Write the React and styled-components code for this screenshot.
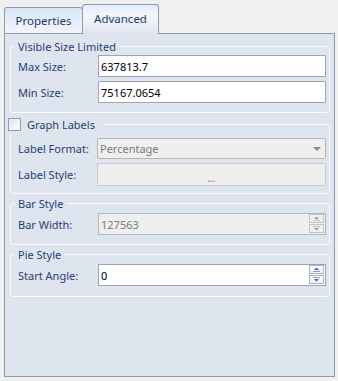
import React from "react";
import styled, { createGlobalStyle } from "styled-components";

const Global = createGlobalStyle`
  html, body { margin: 0; padding: 0; background: #f0f0f0; }
  body { font-family: "Noto Sans", "Open Sans", sans-serif; font-size: 11px; }
  * { box-sizing: border-box; }
`;

const Page = styled.div`
  width: 338px;
  height: 381px;
  padding: 4px 0 0 4px;
`;

const TabStrip = styled.div`
  display: flex;
  align-items: flex-end;
  height: 29px;
`;

const Tab = styled.div`
  position: relative;
  z-index: ${(p) => (p.$active ? 2 : 1)};
  width: ${(p) => p.$w}px;
  height: ${(p) => (p.$active ? 30 : 26)}px;
  margin-bottom: ${(p) => (p.$active ? -1 : 0)}px;
  margin-left: ${(p) => (p.$active ? -1 : 0)}px;
  border: 1px solid #8b9cb2;
  border-bottom: none;
  border-radius: 3px 3px 0 0;
  background: ${(p) =>
    p.$active
      ? "linear-gradient(#e4eefb 0%, #f2f6fc 35%, #e9eef5 70%, #dfe5ee 100%)"
      : "linear-gradient(#d7e5f7 0%, #e9f0fa 60%, #f1f5fb 100%)"};
  color: #1e3a66;
  display: flex;
  justify-content: center;
  padding-top: ${(p) => (p.$active ? 6 : 5)}px;
  font-size: 11.5px;
`;

const Panel = styled.div`
  width: 331px;
  height: 344px;
  border: 1px solid #8b9cb2;
  background: #dfe5ee;
  padding: 5px 4px 0 5px;
  display: flex;
  flex-direction: column;
`;

const Group = styled.fieldset`
  margin: ${(p) => p.$mt}px 0 0 0;
  padding: 0;
  border: 1px solid #fafbfd;
  border-radius: 3px;
  min-width: 0;
`;

const Legend = styled.legend`
  height: 15px;
  line-height: 15px;
  margin-left: ${(p) => p.$ml ?? 4}px;
  padding: 0 ${(p) => p.$pr ?? 3}px 0 ${(p) => p.$pl ?? 3}px;
  color: #1e3f7a;
  font-size: 11px;
  display: flex;
  align-items: center;
  gap: 6px;
`;

const CheckBox = styled.span`
  display: inline-block;
  width: 13px;
  height: 13px;
  border: 1px solid #8e9fb5;
  background: linear-gradient(135deg, #d9dfe8 0%, #f3f5f8 60%, #ffffff 100%);
  box-shadow: inset 0 0 0 1px #eef1f5;
`;

const Body = styled.div`
  padding: ${(p) => p.$pt}px 3px ${(p) => p.$pb}px 7px;
  display: flex;
  flex-direction: column;
  gap: 4px;
`;

const Row = styled.div`
  display: grid;
  grid-template-columns: 80px 1fr;
  align-items: center;
`;

const Label = styled.span`
  color: #1e3f7a;
  font-size: 11px;
  white-space: nowrap;
`;

const Field = styled.div`
  height: ${(p) => p.$h ?? 22}px;
  margin-left: ${(p) => p.$ml ?? 0}px;
  border: 1px solid ${(p) => (p.$disabled ? "#b4b7bc" : "#9aa6b6")};
  border-radius: ${(p) => (p.$round ? 2 : 0)}px;
  background: ${(p) => (p.$disabled ? "#efefef" : "#ffffff")};
  color: ${(p) => (p.$disabled ? "#7a7a7a" : "#000000")};
  font-size: 11px;
  display: flex;
  align-items: center;
  padding-left: 2px;
`;

const FieldText = styled.span`
  flex: 1;
`;

const StyleBox = styled.div`
  height: 23px;
  margin-left: -1px;
  border: 1px solid #c9cbce;
  background: #eeeeee;
  display: flex;
  align-items: center;
  justify-content: center;
  padding-top: 8px;
  color: #b7875f;
  font-size: 9px;
  font-weight: bold;
`;

const Spin = styled.div`
  display: flex;
  flex-direction: column;
  gap: 1px;
  align-self: flex-start;
  margin-right: 1px;
`;

const SpinButton = styled.div`
  width: 15px;
  height: 9px;
  border: 1px solid ${(p) => (p.$disabled ? "#c3c3c3" : "#aeb3ba")};
  background: ${(p) => (p.$disabled ? "#f0f0f0" : "linear-gradient(#ffffff, #eceef2)")};
  display: flex;
  align-items: center;
  justify-content: center;
`;

const ComboArrow = styled.span`
  width: 0;
  height: 0;
  margin-right: 4px;
  border-left: 4px solid transparent;
  border-right: 4px solid transparent;
  border-top: 4px solid #8c8c8c;
`;

function SpinIcon({ down, disabled }) {
  const c = disabled ? "#9a9a9a" : "#3f5fbf";
  return (
    <svg width="7" height="5" viewBox="0 0 7 5">
      {down ? (
        <>
          <rect x="0" y="0" width="7" height="1" fill={c} opacity="0.6" />
          <path d="M1 2 L6 2 L3.5 4.5 Z" fill={c} />
        </>
      ) : (
        <>
          <path d="M3.5 0.5 L6 3 L1 3 Z" fill={c} />
          <rect x="0" y="4" width="7" height="1" fill={c} opacity="0.6" />
        </>
      )}
    </svg>
  );
}

function SpinField({ value, disabled }) {
  return (
    <Field $disabled={disabled}>
      <FieldText>{value}</FieldText>
      <Spin>
        <SpinButton $disabled={disabled}>
          <SpinIcon disabled={disabled} />
        </SpinButton>
        <SpinButton $disabled={disabled}>
          <SpinIcon down disabled={disabled} />
        </SpinButton>
      </Spin>
    </Field>
  );
}

export default function App() {
  return (
    <Page>
      <Global />
      <TabStrip>
        <Tab $w={79}>Properties</Tab>
        <Tab $w={77} $active>
          Advanced
        </Tab>
      </TabStrip>
      <Panel>
        <Group $mt={0}>
          <Legend>Visible Size Limited</Legend>
          <Body $pt={1} $pb={9}>
            <Row>
              <Label>Max Size:</Label>
              <Field>
                <FieldText>637813.7</FieldText>
              </Field>
            </Row>
            <Row>
              <Label>Min Size:</Label>
              <Field>
                <FieldText>75167.0654</FieldText>
              </Field>
            </Row>
          </Body>
        </Group>

        <Group $mt={4}>
          <Legend $ml={-3} $pl={0} $pr={9}>
            <CheckBox />
            Graph Labels
          </Legend>
          <Body $pt={6} $pb={7}>
            <Row>
              <Label>Label Format:</Label>
              <Field $disabled $round $h={21} $ml={-1}>
                <FieldText>Percentage</FieldText>
                <ComboArrow />
              </Field>
            </Row>
            <Row>
              <Label>Label Style:</Label>
              <StyleBox>...</StyleBox>
            </Row>
          </Body>
        </Group>

        <Group $mt={2}>
          <Legend>Bar Style</Legend>
          <Body $pt={2} $pb={9}>
            <Row>
              <Label>Bar Width:</Label>
              <SpinField value="127563" disabled />
            </Row>
          </Body>
        </Group>

        <Group $mt={2}>
          <Legend>Pie Style</Legend>
          <Body $pt={2} $pb={10}>
            <Row>
              <Label>Start Angle:</Label>
              <SpinField value="0" />
            </Row>
          </Body>
        </Group>
      </Panel>
    </Page>
  );
}
